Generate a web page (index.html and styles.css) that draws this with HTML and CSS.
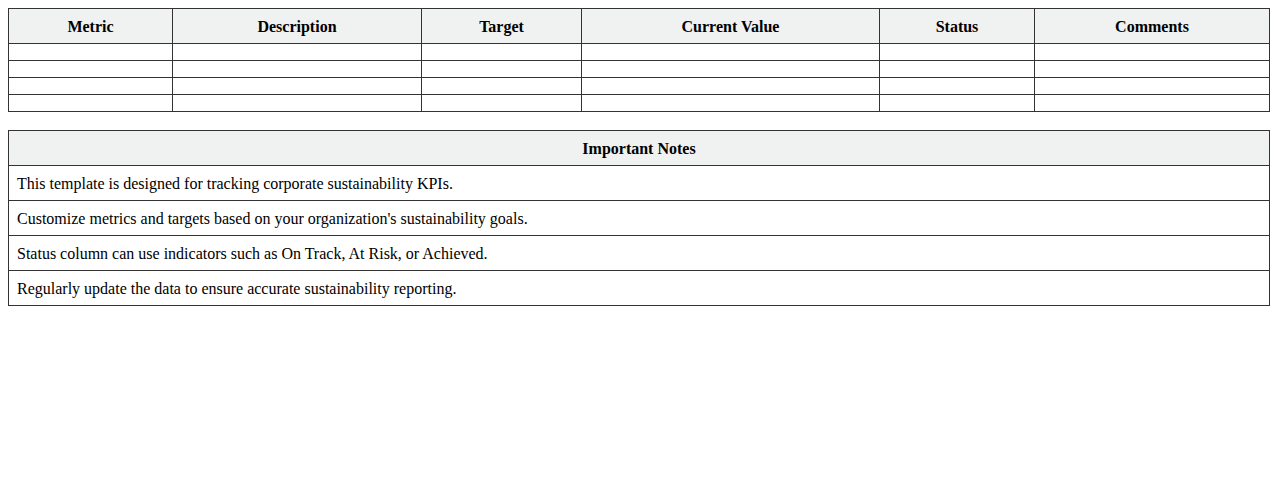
FILE: index.html
```html
<!DOCTYPE html>
<html>
<head>
<meta charset="utf-8">
<link rel="stylesheet" href="styles.css">
</head>
<body>
<table class="kpi">
  <colgroup>
    <col class="c1"><col class="c2"><col class="c3"><col class="c4"><col class="c5"><col class="c6">
  </colgroup>
  <thead>
    <tr><th>Metric</th><th>Description</th><th>Target</th><th>Current Value</th><th>Status</th><th>Comments</th></tr>
  </thead>
  <tbody>
    <tr><td></td><td></td><td></td><td></td><td></td><td></td></tr>
    <tr><td></td><td></td><td></td><td></td><td></td><td></td></tr>
    <tr><td></td><td></td><td></td><td></td><td></td><td></td></tr>
    <tr><td></td><td></td><td></td><td></td><td></td><td></td></tr>
  </tbody>
</table>
<table class="notes">
  <thead><tr><th>Important Notes</th></tr></thead>
  <tbody>
    <tr><td>This template is designed for tracking corporate sustainability KPIs.</td></tr>
    <tr><td>Customize metrics and targets based on your organization's sustainability goals.</td></tr>
    <tr><td>Status column can use indicators such as On Track, At Risk, or Achieved.</td></tr>
    <tr><td>Regularly update the data to ensure accurate sustainability reporting.</td></tr>
  </tbody>
</table>
</body>
</html>
```
FILE: styles.css
```css
body {
  margin: 8px;
  font-family: "Liberation Serif", "Times New Roman", serif;
  font-size: 16px;
  color: #000;
  background: #fff;
}
table {
  width: 100%;
  border-collapse: collapse;
  table-layout: fixed;
}
th, td {
  border: 1px solid #333;
  padding: 9px 8px 7px;
  line-height: 18px;
}
td:empty {
  line-height: 0;
}
th {
  background: #f0f2f2;
  font-weight: bold;
  text-align: center;
}
td {
  text-align: left;
}
.kpi .c1 { width: 164px; }
.kpi .c2 { width: 249px; }
.kpi .c3 { width: 160px; }
.kpi .c4 { width: 298px; }
.kpi .c5 { width: 155px; }
.kpi .c6 { width: 235px; }
.notes {
  margin-top: 18px;
}
```
